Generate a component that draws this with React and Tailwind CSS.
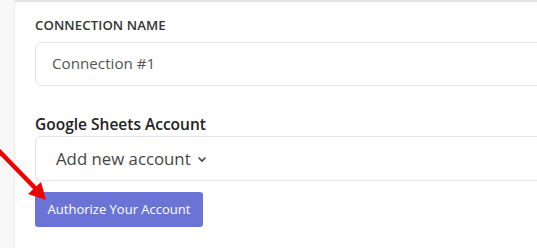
import React from 'react';

const App = () => {
  return (
    <div
      className="relative flex h-[248px] w-[537px] overflow-hidden bg-white"
      style={{ fontFamily: '"Open Sans", "Noto Sans", sans-serif' }}
    >
      {/* sidebar edge */}
      <div className="w-[15px] shrink-0 border-r border-[#ececec] bg-[#f8f8f8]" />

      <div className="flex-1 border-t-2 border-[#e2e2e2] pl-[20px] pt-[14px]">
        <label className="block text-[13.2px] font-semibold tracking-[0.1px] text-[#333]">
          CONNECTION NAME
        </label>
        <div className="mt-[6px] flex h-[44px] w-[520px] items-center rounded-[6px] border border-[#e3e3e3] pl-[16px] text-[15.2px] text-[#555]">
          Connection #1
        </div>

        <label className="mt-[27px] block text-[15.5px] font-semibold text-[#222]">
          Google Sheets Account
        </label>
        <div className="flex h-[45px] w-[520px] items-center rounded-[6px] border border-[#e3e3e3] pl-[20px] text-[16.8px] text-[#444]">
          Add new account
          <svg className="ml-[6px] mt-[2px]" width="10" height="7" viewBox="0 0 10 7">
            <path d="M1.5 1.5 L5 5 L8.5 1.5" fill="none" stroke="#444" strokeWidth="1.6" />
          </svg>
        </div>

        <button className="mt-[11px] flex h-[35px] w-[168px] items-center justify-center rounded-[3px] bg-[#6b74d6] text-[13px] text-white">
          Authorize Your Account
        </button>
      </div>

      {/* annotation arrow */}
      <svg className="absolute left-0 top-0" width="60" height="210" viewBox="0 0 60 210">
        <line x1="-2" y1="150" x2="36" y2="189" stroke="#f20000" strokeWidth="4.5" />
        <polygon points="46,200 28,194 41,182" fill="#f20000" />
      </svg>
    </div>
  );
};

export default App;
